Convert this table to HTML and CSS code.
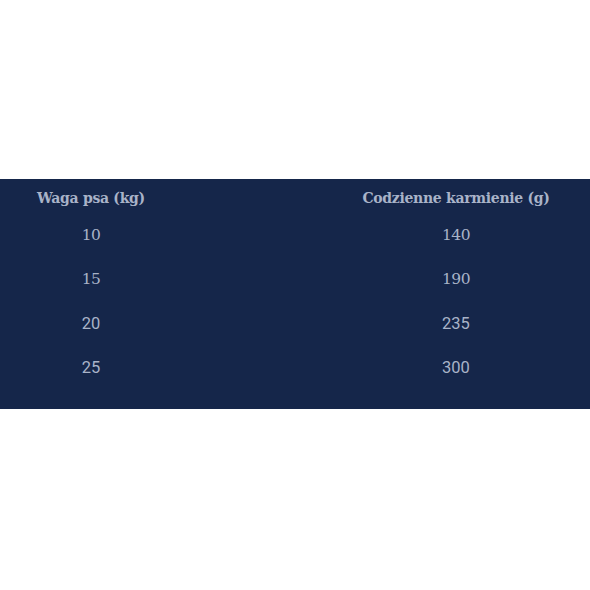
FILE: index.html
```html
<!DOCTYPE html>
<html lang="pl">
<head>
<meta charset="utf-8">
<link rel="stylesheet" href="styles.css">
</head>
<body>
<div class="panel">
  <div class="table">
    <div class="cell head c1">Waga psa (kg)</div>
    <div class="cell head c2">Codzienne karmienie (g)</div>
    <div class="cell slab c1">10</div>
    <div class="cell slab c2">140</div>
    <div class="cell slab c1">15</div>
    <div class="cell slab c2">190</div>
    <div class="cell sans c1">20</div>
    <div class="cell sans c2">235</div>
    <div class="cell sans c1">25</div>
    <div class="cell sans c2">300</div>
  </div>
</div>
</body>
</html>
```

FILE: styles.css
```css
html, body {
  margin: 0;
  padding: 0;
  background: #ffffff;
}
body {
  padding-top: 179px;
}
.panel {
  background: #15264a;
  height: 230px;
  box-sizing: border-box;
  padding-top: 4px;
}
.table {
  display: grid;
  grid-template-columns: 182px 140px 268px;
  grid-template-rows: 30px;
  grid-auto-rows: 44px;
  color: #a9b3c8;
}
.cell {
  display: flex;
  align-items: center;
  justify-content: center;
  font-size: 15px;
}
.c1 { grid-column: 1; }
.c2 { grid-column: 3; }
.head {
  font-family: "DejaVu Serif", serif;
  font-weight: bold;
  font-size: 14px;
  letter-spacing: -0.3px;
}
.slab {
  font-family: "DejaVu Serif", serif;
  font-size: 15.5px;
  letter-spacing: -0.5px;
}
.sans {
  font-family: Roboto, sans-serif;
  font-size: 16.5px;
}
```
